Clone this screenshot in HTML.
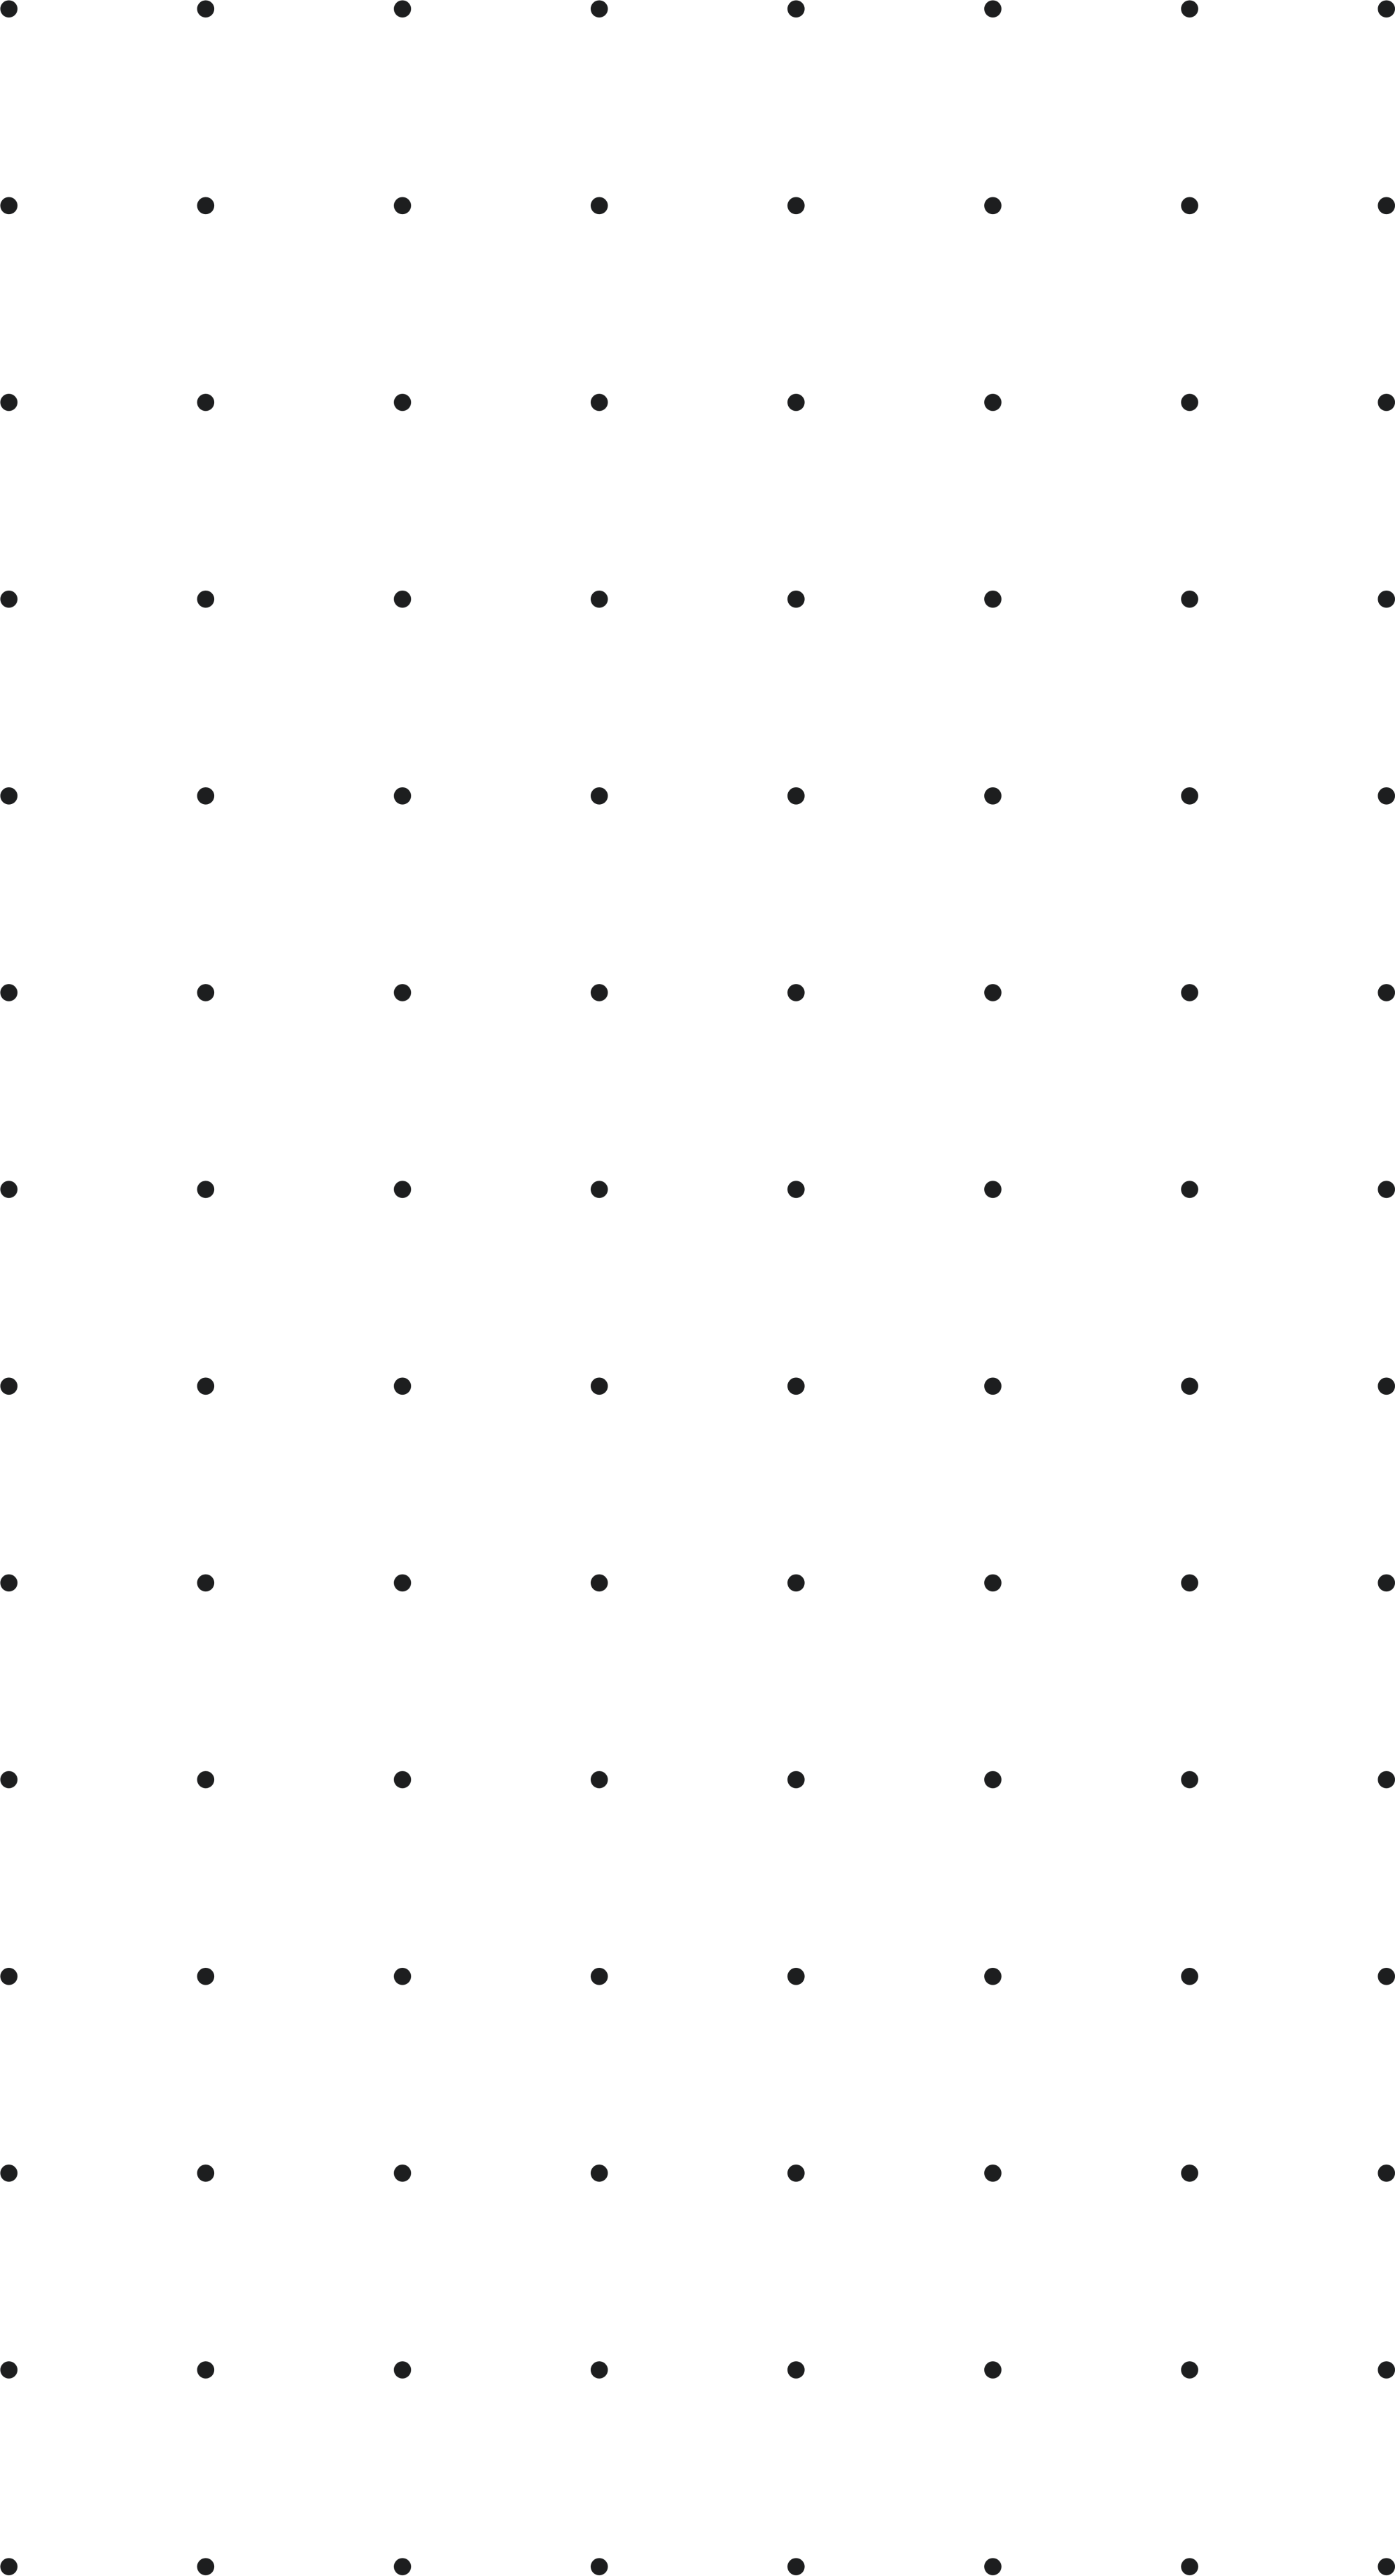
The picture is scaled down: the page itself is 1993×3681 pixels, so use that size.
<!DOCTYPE html>
<html><head><style>html,body{margin:0;padding:0;background:#fff;}svg{display:block}</style></head>
<body>
<svg width="1993" height="3681" viewBox="0 0 1993 3681" xmlns="http://www.w3.org/2000/svg">
<defs><pattern id="p" x="-127.9" y="-127.9" width="281.15" height="281.15" patternUnits="userSpaceOnUse"><circle cx="140.6" cy="140.6" r="12.3" fill="#1d1e1f"/></pattern></defs>
<rect width="1993" height="3681" fill="#fff"/>
<rect width="1993" height="3681" fill="url(#p)"/>
</svg>
</body></html>
